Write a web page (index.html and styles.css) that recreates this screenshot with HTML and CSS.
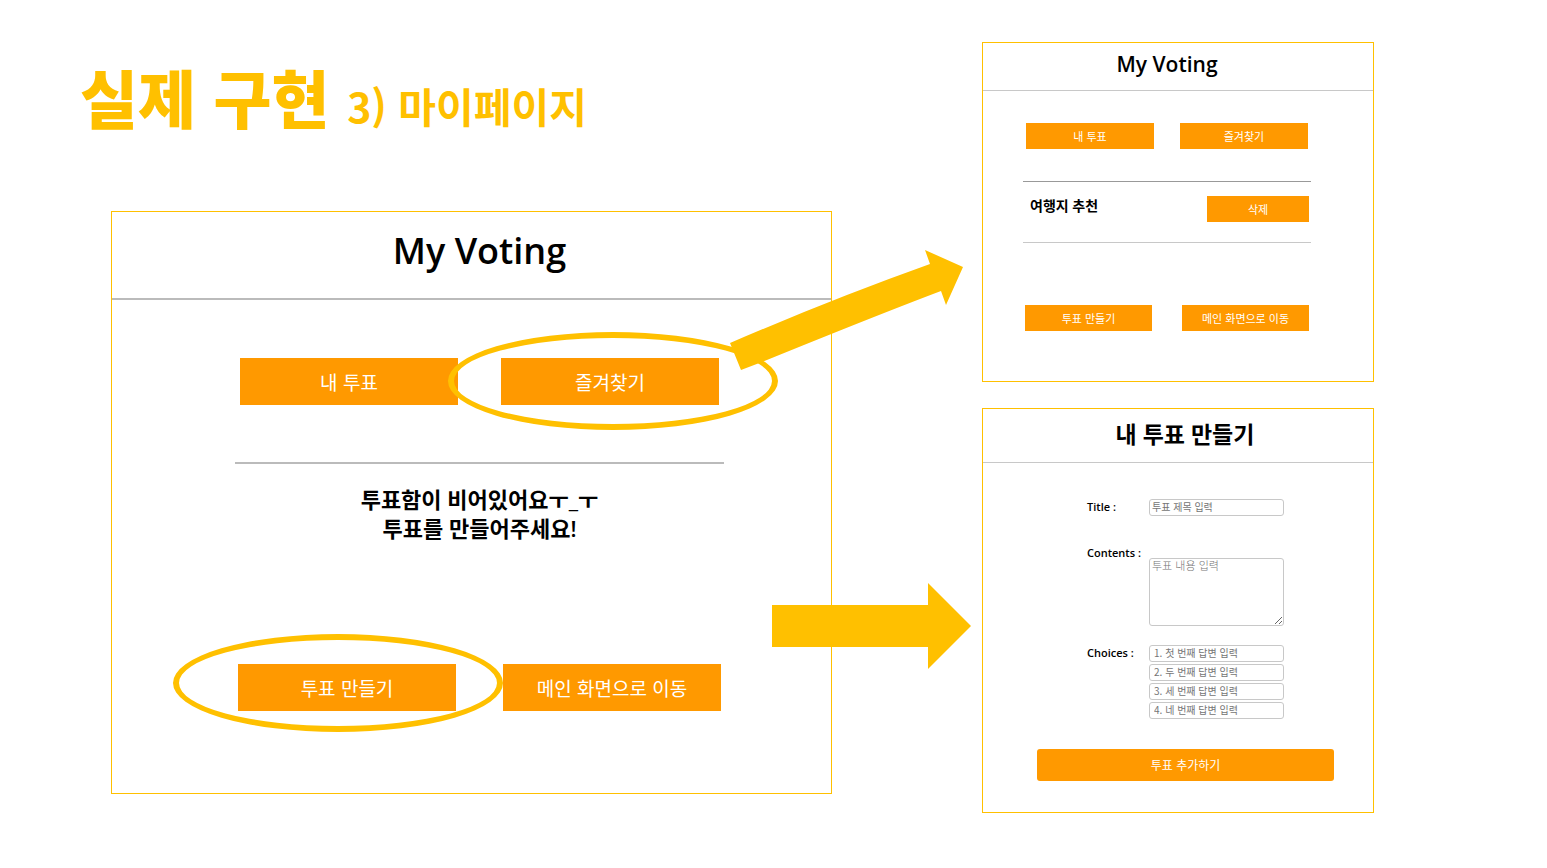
FILE: index.html
```html
<!DOCTYPE html>
<html lang="ko">
<head>
<meta charset="utf-8">
<meta name="viewport" content="width=device-width, initial-scale=1">
<title>실제 구현 3) 마이페이지</title>
<link rel="stylesheet" href="styles.css">
</head>
<body>
<main class="slide">
  <section class="main-column">
    <h1 class="slide-title">실제 구현 <span class="slide-subtitle">3) 마이페이지</span></h1>
    <article class="card card-large">
      <header class="card-header"><h2 class="card-title">My Voting</h2></header>
      <div class="card-body">
        <div class="button-row">
          <button class="btn" type="button">내 투표</button>
          <div class="marked">
            <button class="btn" type="button">즐겨찾기</button>
            <span class="ring ring-favorites"></span>
          </div>
        </div>
        <hr class="rule">
        <p class="empty-message">투표함이 비어있어요ㅜ_ㅜ<br>투표를 만들어주세요!</p>
        <div class="button-row button-row-bottom">
          <div class="marked">
            <button class="btn" type="button">투표 만들기</button>
            <span class="ring ring-create"></span>
          </div>
          <button class="btn" type="button">메인 화면으로 이동</button>
        </div>
      </div>
      <svg class="arrow arrow-up" width="236" height="122" viewBox="0 0 236 122" aria-hidden="true">
        <path d="M0 93Q102 49 200 14L195 0L233 17L216 55L211 41Q150 64 32 112L11 120Z"/>
      </svg>
      <svg class="arrow arrow-right" width="200" height="86" viewBox="0 0 200 86" aria-hidden="true">
        <path d="M0 22H156V0L199 43L156 86V64H0Z"/>
      </svg>
    </article>
  </section>

  <section class="side-column">
    <article class="card card-small card-favorites">
      <header class="card-header"><h2 class="card-title">My Voting</h2></header>
      <div class="card-body">
        <div class="button-row">
          <button class="btn" type="button">내 투표</button>
          <button class="btn" type="button">즐겨찾기</button>
        </div>
        <hr class="rule rule-dark">
        <div class="vote-item">
          <h3 class="vote-name">여행지 추천</h3>
          <button class="btn btn-delete" type="button">삭제</button>
        </div>
        <hr class="rule">
        <div class="button-row button-row-bottom">
          <button class="btn" type="button">투표 만들기</button>
          <button class="btn" type="button">메인 화면으로 이동</button>
        </div>
      </div>
    </article>

    <article class="card card-small card-create">
      <header class="card-header"><h2 class="card-title">내 투표 만들기</h2></header>
      <form class="vote-form">
        <div class="fields">
          <label class="label" for="vote-title">Title :</label>
          <input class="field" id="vote-title" type="text" placeholder="투표 제목 입력">
          <label class="label label-contents" for="vote-contents">Contents :</label>
          <textarea class="field field-area" id="vote-contents" placeholder="투표 내용 입력"></textarea>
          <label class="label" for="choice-1">Choices :</label>
          <div class="choices">
            <input class="field field-choice" id="choice-1" type="text" placeholder="1. 첫 번째 답변 입력">
            <input class="field field-choice" type="text" aria-label="2" placeholder="2. 두 번째 답변 입력">
            <input class="field field-choice" type="text" aria-label="3" placeholder="3. 세 번째 답변 입력">
            <input class="field field-choice" type="text" aria-label="4" placeholder="4. 네 번째 답변 입력">
          </div>
        </div>
        <button class="btn btn-submit" type="button">투표 추가하기</button>
      </form>
    </article>
  </section>
</main>
</body>
</html>
```
FILE: styles.css
```css
:root {
  --amber: #ffc000;
  --orange: #ff9900;
  --line: #c8c8c8;
}

* {
  box-sizing: border-box;
}

body {
  margin: 0;
  background: #fff;
  color: #000;
  font-family: "Open Sans", "Noto Sans CJK KR", sans-serif;
}

h1, h2, h3, p {
  margin: 0;
}

.slide {
  display: grid;
  grid-template-columns: 752fr 392fr;
  column-gap: 150px;
  align-items: start;
  padding: 42px 173px 40px 80px;
}

.slide-title {
  padding-top: 6px;
  color: var(--amber);
  font-family: "Noto Sans CJK KR", sans-serif;
  font-size: 63px;
  font-weight: 900;
  line-height: 96px;
  white-space: nowrap;
}

.slide-subtitle {
  font-size: 41px;
  font-weight: 700;
}

/* Cards */
.card {
  position: relative;
  border: 1px solid var(--amber);
}

.card-large {
  margin: 58px 0 0 31px;
}

.card-header {
  display: flex;
  align-items: center;
  justify-content: center;
  border-bottom: 1px solid var(--line);
}

.card-title {
  font-weight: 600;
}

.card-large .card-header {
  height: 88px;
  padding: 0 0 8px 16px;
  border-bottom: 2px solid #bbb;
}

.card-large .card-title {
  font-size: 36px;
  line-height: 52px;
}

.card-large .card-body {
  padding: 58px 107px 82px 123px;
}

.button-row {
  display: flex;
  gap: 26px;
  padding: 0 3px;
}

.card-large .button-row {
  gap: 43px;
  padding: 0 5px;
}

.card-large .button-row-bottom {
  gap: 47px;
  padding: 0 3px;
}

.btn {
  flex: 1;
  width: 100%;
  height: 26px;
  padding: 0;
  border: 0;
  background: var(--orange);
  color: #fff;
  font-family: "Noto Sans CJK KR", sans-serif;
  font-size: 11px;
  font-weight: 400;
  line-height: 16px;
}

.card-large .btn {
  height: 47px;
  font-size: 19px;
  line-height: 28px;
}

.marked {
  position: relative;
  display: flex;
  flex: 1;
}

.rule {
  height: 1px;
  margin: 0;
  border: 0;
  background: var(--line);
}

.rule-dark {
  background: #999;
}

.card-large .rule {
  height: 2px;
  margin-top: 57px;
  background: #bbb;
}

.empty-message {
  margin: 21px 0 121px;
  font-size: 22px;
  font-weight: 600;
  line-height: 29px;
  text-align: center;
}

/* Highlights drawn over the large card */
.ring {
  position: absolute;
  z-index: 1;
  width: 330px;
  height: 98px;
  border: 6px solid var(--amber);
  border-radius: 50%;
  pointer-events: none;
}

.ring-favorites {
  top: -26px;
  left: -53px;
}

.ring-create {
  top: -30px;
  left: -65px;
}

.arrow {
  position: absolute;
  z-index: 2;
  fill: var(--amber);
}

.arrow-up {
  top: 38px;
  right: -135px;
}

.arrow-right {
  top: 371px;
  right: -141px;
}

/* Side cards */
.side-column {
  display: grid;
  gap: 26px;
}

.card-small .card-title {
  font-size: 21px;
  line-height: 30px;
}

.card-favorites .card-header {
  height: 48px;
  padding: 0 22px 6px 0;
}

.card-favorites .card-body {
  padding: 32px 62px 50px 40px;
}

.card-favorites .rule-dark {
  margin-top: 32px;
}

.vote-item {
  display: flex;
  justify-content: space-between;
  padding: 14px 2px 20px 7px;
}

.vote-name {
  font-size: 14px;
  font-weight: 600;
  line-height: 20px;
}

.btn-delete {
  flex: none;
  width: 102px;
}

.card-favorites .button-row-bottom {
  gap: 30px;
  padding: 62px 2px 0;
}

.card-create .card-header {
  height: 54px;
  padding: 0 0 4px 14px;
}

.card-create .card-title {
  font-size: 23px;
}

.vote-form {
  padding: 36px 39px 31px 54px;
}

.fields {
  display: grid;
  grid-template-columns: 62px 1fr;
  align-items: start;
  padding: 0 50px;
}

.label {
  font-size: 11px;
  font-weight: 600;
  line-height: 16px;
  white-space: nowrap;
}

.label-contents {
  margin-top: 29px;
}

.field {
  width: 100%;
  height: 17px;
  padding: 0 2px 2px;
  border: 1px solid var(--line);
  border-radius: 3px;
  background: #fff;
  font-family: "Noto Sans CJK KR", sans-serif;
  font-size: 10px;
  font-weight: 400;
  line-height: 12px;
}

.field::placeholder {
  color: #757575;
  opacity: 1;
}

.field-area {
  height: 68px;
  margin: 42px 0 19px;
  font-size: 11px;
  font-weight: 300;
  resize: vertical;
}

.choices {
  display: grid;
  gap: 2px;
}

.field-choice {
  padding: 0 4px 2px;
}

.btn-submit {
  display: block;
  height: 32px;
  margin-top: 30px;
  border-radius: 3px;
  font-size: 12px;
}
```
